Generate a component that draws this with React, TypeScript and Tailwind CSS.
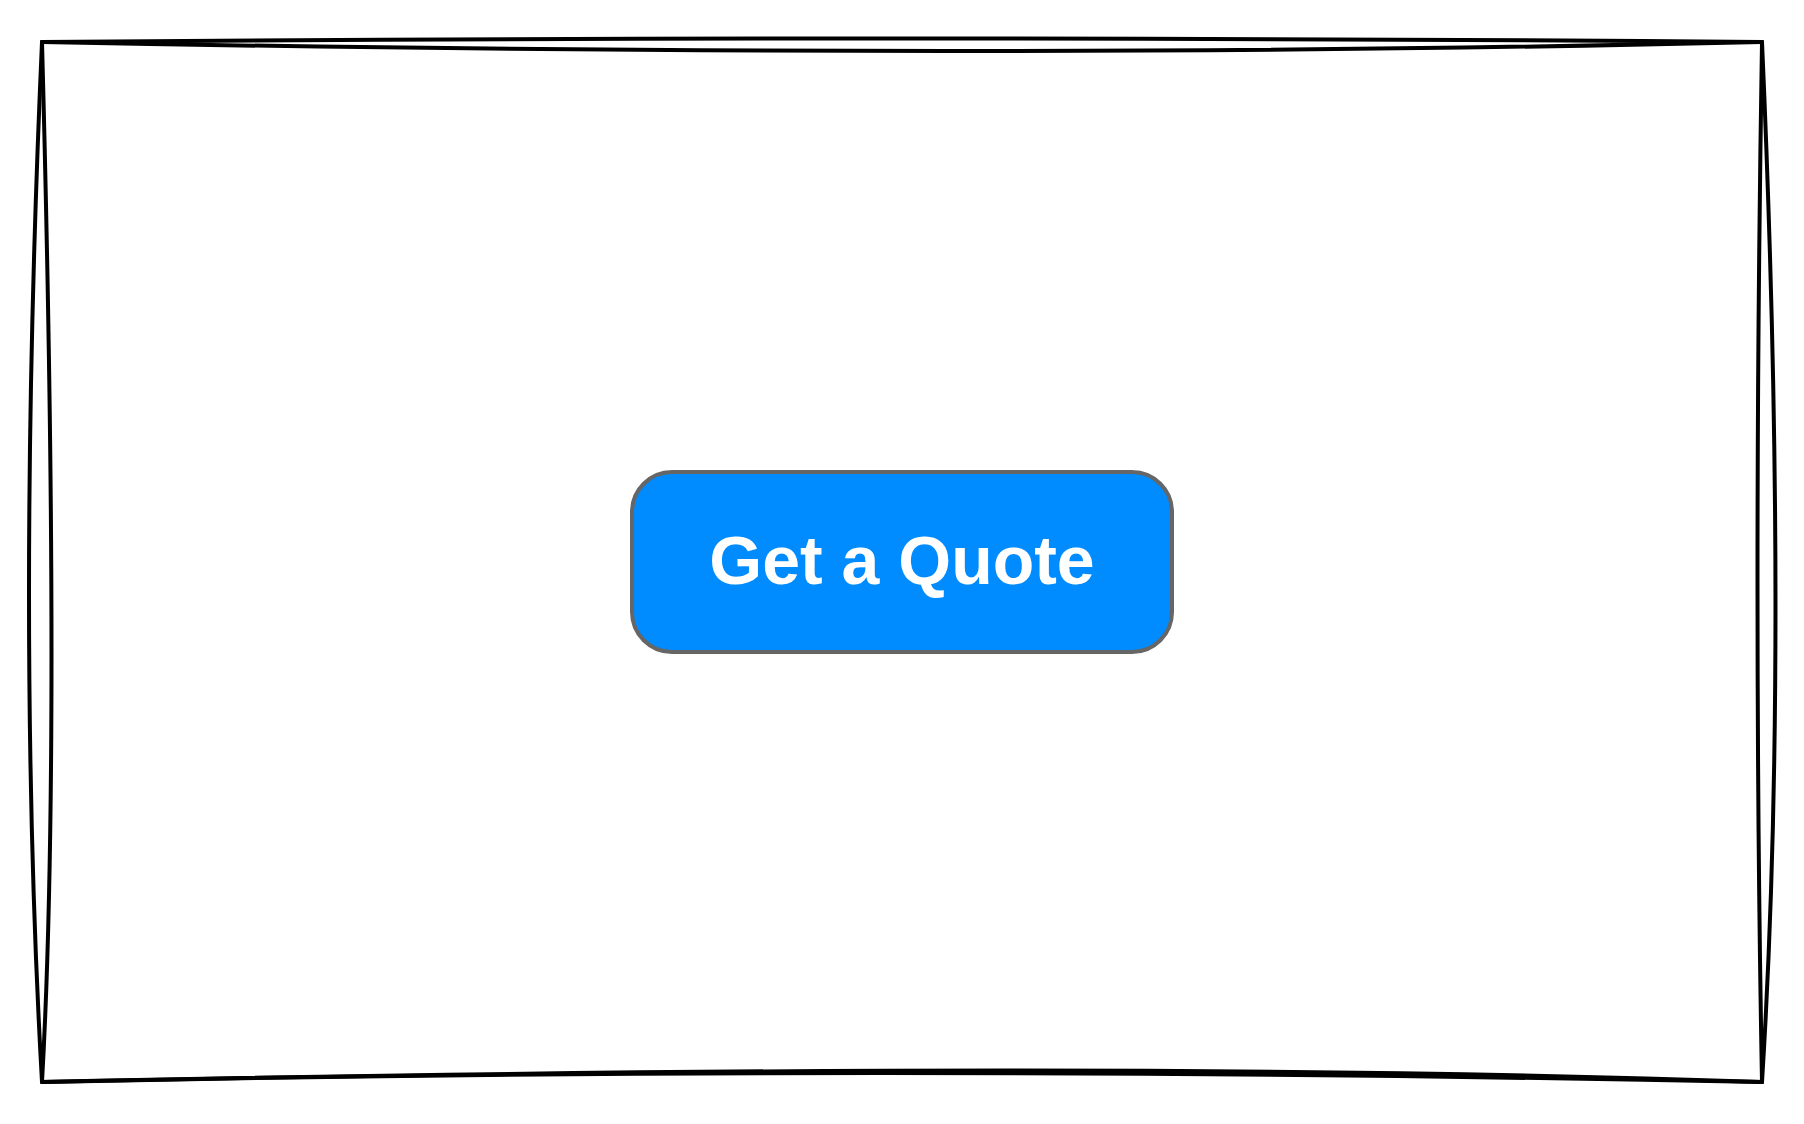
const FRAME_STROKES = [
  // top edge
  'M42 42Q880 35 1762 42',
  'M42 42Q990 60 1762 42',
  // right edge
  'M1762 42Q1789 650 1762 1082',
  'M1762 42Q1753 600 1762 1082',
  // bottom edge
  'M1762 1082Q1114 1059 42 1082',
  'M1762 1082Q860 1064 42 1082',
  // left edge
  'M42 1082Q16 624 42 42',
  'M42 1082Q61 745 42 42',
];

function SketchFrame() {
  return (
    <svg
      aria-hidden="true"
      className="pointer-events-none absolute inset-0 h-full w-full"
      viewBox="0 0 1804 1124"
      preserveAspectRatio="none"
      fill="none"
      stroke="#000000"
      strokeWidth="4"
      strokeLinecap="round"
    >
      {FRAME_STROKES.map((d) => (
        <path key={d} d={d} vectorEffect="non-scaling-stroke" />
      ))}
    </svg>
  );
}

export default function App() {
  return (
    <main className="relative flex min-h-screen items-center justify-center bg-white">
      <SketchFrame />
      <button
        type="button"
        className="relative cursor-pointer rounded-[42px] border-4 border-[#666666] bg-[#008cff] px-[75px] pt-[50px] pb-[54px] font-['Liberation_Sans',Arial,sans-serif] text-[68px] leading-[72px] font-bold text-white"
      >
        Get a Quote
      </button>
    </main>
  );
}
